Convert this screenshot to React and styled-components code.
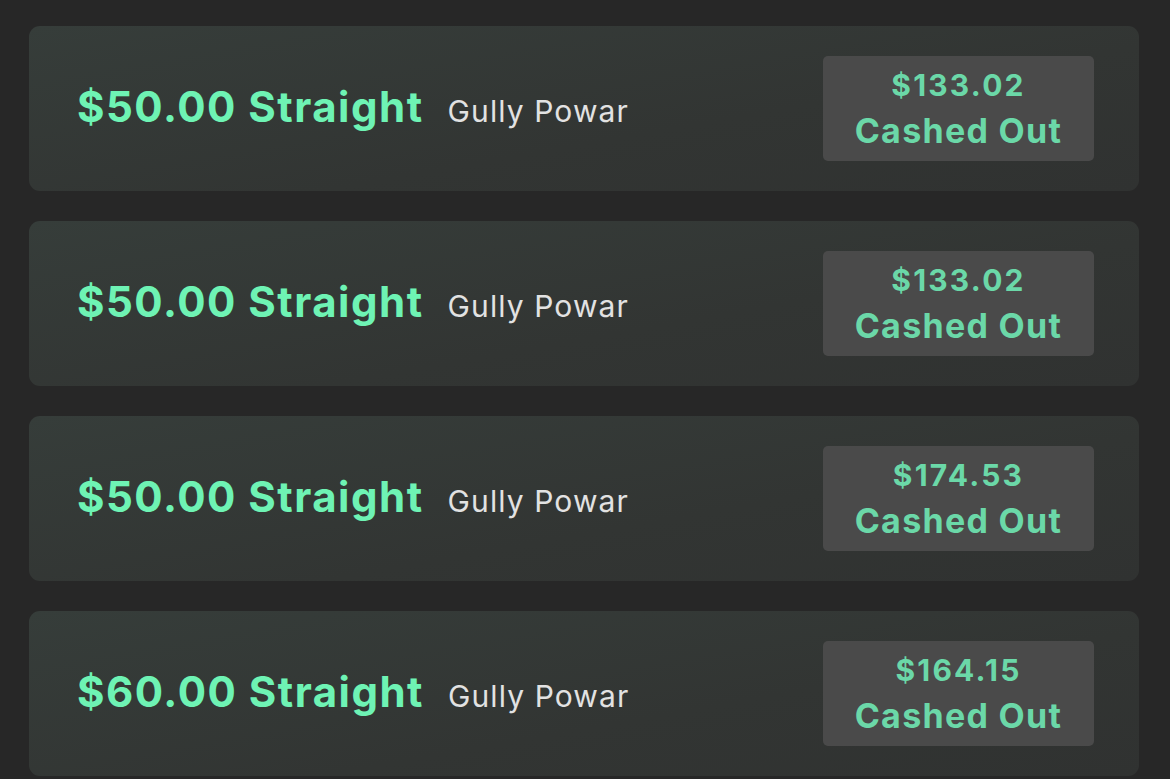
import React from 'react'
import styled, { createGlobalStyle } from 'styled-components'

const GlobalStyle = createGlobalStyle`
  html, body {
    margin: 0;
    padding: 0;
    background: #272727;
  }
  body {
    font-family: Inter, "Noto Sans", "Liberation Sans", sans-serif;
  }
`

const Page = styled.div`
  display: flex;
  flex-direction: column;
  gap: 30px;
  padding: 26px 31px 0 29px;
  min-height: 779px;
  box-sizing: border-box;
`

const Card = styled.div`
  display: flex;
  align-items: center;
  justify-content: space-between;
  height: 165px;
  box-sizing: border-box;
  padding: 0 45px 0 48px;
  border-radius: 11px;
  background: linear-gradient(170deg, #363d3a 0%, #323533 60%, #303231 100%);
`

const BetInfo = styled.div`
  display: flex;
  align-items: baseline;
  gap: 24px;
  padding-bottom: 4px;
`

const Title = styled.span`
  font-size: 42px;
  font-weight: 700;
  color: #6ef3b4;
  letter-spacing: 1.5px;
`

const Player = styled.span`
  font-size: 30px;
  font-weight: 400;
  color: #e2e2e2;
  letter-spacing: 1.1px;
`

const Badge = styled.div`
  width: 271px;
  height: 105px;
  box-sizing: border-box;
  border-radius: 5px;
  background: #4a4a4a;
  display: flex;
  flex-direction: column;
  align-items: center;
  justify-content: center;
  color: #6bd8a8;
  font-weight: 700;
`

const Amount = styled.div`
  font-size: 30px;
  line-height: 44px;
  letter-spacing: 2.2px;
`

const Status = styled.div`
  font-size: 34px;
  line-height: 48px;
  letter-spacing: 1.3px;
`

const bets = [
  { stake: '$50.00', type: 'Straight', player: 'Gully Powar', payout: '$133.02' },
  { stake: '$50.00', type: 'Straight', player: 'Gully Powar', payout: '$133.02' },
  { stake: '$50.00', type: 'Straight', player: 'Gully Powar', payout: '$174.53' },
  { stake: '$60.00', type: 'Straight', player: 'Gully Powar', payout: '$164.15' }
]

const App = () => {
  return <>
    <GlobalStyle />
    <Page>
      {bets.map((bet, i) => (
        <Card key={i}>
          <BetInfo>
            <Title>{`${bet.stake} ${bet.type}`}</Title>
            <Player>{bet.player}</Player>
          </BetInfo>
          <Badge>
            <Amount>{bet.payout}</Amount>
            <Status>Cashed Out</Status>
          </Badge>
        </Card>
      ))}
    </Page>
  </>
}

export default App
